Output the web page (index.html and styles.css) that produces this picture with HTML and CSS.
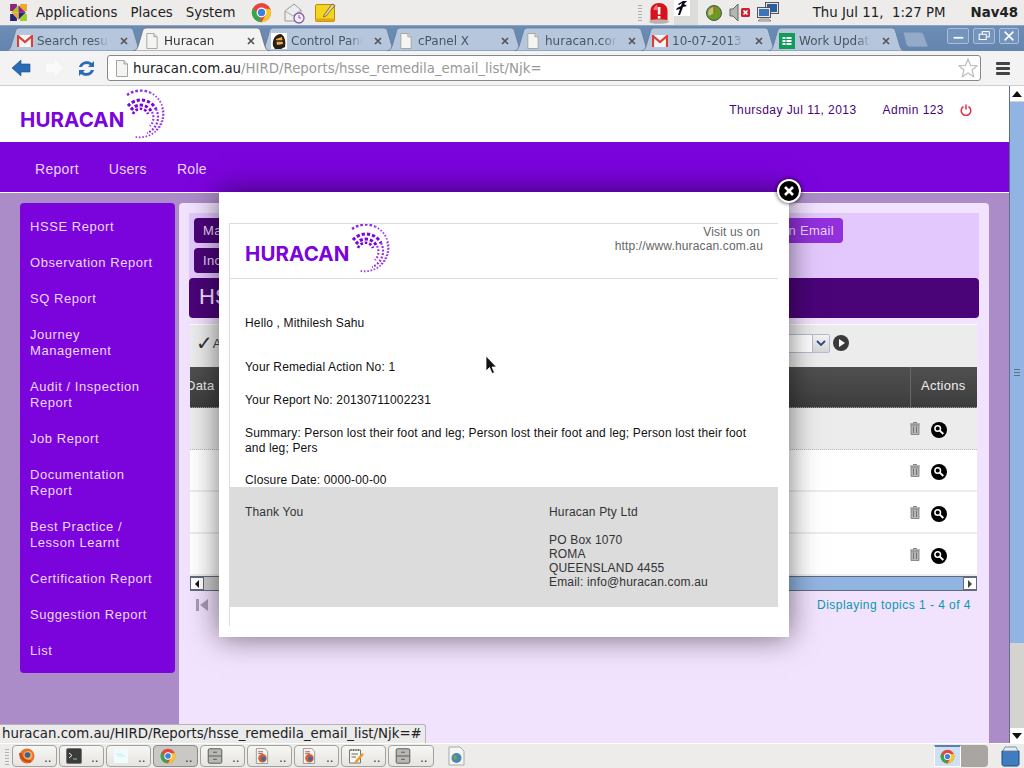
FILE: index.html
```html
<!DOCTYPE html>
<html lang="en">
<head>
<meta charset="utf-8">
<title>Huracan</title>
<link rel="stylesheet" href="styles.css">
</head>
<body>
<svg class="defs" aria-hidden="true">
  <symbol id="chrome" viewBox="0 0 24 24">
    <circle cx="12" cy="12" r="11" fill="#e8453c"/>
    <path d="M3 18.3 A11 11 0 0 1 2.5 6.5 L8 14 L12 23 A11 11 0 0 1 3 18.3z" fill="#35a84f"/>
    <path d="M12 23 A11 11 0 0 0 22.4 8.4 L12 7 L16.5 15z" fill="#f7c829"/>
    <path d="M7 14 L12 23 L3.5 19 L2 10z" fill="#35a84f"/>
    <circle cx="12" cy="12" r="5.6" fill="#fff"/>
    <circle cx="12" cy="12" r="4.2" fill="#3f7fe0"/>
  </symbol>
  <symbol id="doc" viewBox="0 0 14 17">
    <path d="M1.5 .5H9L12.5 4V16.5H1.5z" fill="#f4f4f2" stroke="#a3a3a0"/>
    <path d="M9 .5V4H12.5" fill="#dcdcd8" stroke="#a3a3a0"/>
  </symbol>
  <symbol id="gmail" viewBox="0 0 16 12">
    <rect width="16" height="12" fill="#f5f5f5"/>
    <path d="M1 12V1L8 7L15 1V12" fill="none" stroke="#dc3f35" stroke-width="2.2"/>
  </symbol>
  <symbol id="close" viewBox="0 0 10 10">
    <path d="M2 2L8 8M8 2L2 8" stroke="#555" stroke-width="1.7"/>
  </symbol>
  <symbol id="swirl" viewBox="120 86 50 55">
    <g fill="none" stroke="#7b04dd">
      <path d="M127 95A23.5 23.5 0 0 1 150 92.500" stroke-width="2.400" stroke-dasharray="2.600 2" opacity=".85"/>
      <path d="M150 92.500A23.500 23.500 0 0 1 134 136.500" stroke-width="1.800" stroke-dasharray="1.600 1.700" opacity=".75"/>
      <path d="M128 106A17 17 0 0 1 156 109" stroke-width="3" stroke-dasharray="3.200 2"/>
      <path d="M156 109A17 17 0 0 1 147 133" stroke-width="2.200" stroke-dasharray="1.800 1.700" opacity=".85"/>
      <path d="M131 110A12 12 0 0 1 151 111" stroke-width="3" stroke-dasharray="3.200 1.900"/>
      <path d="M152 112A12 12 0 0 1 150 126" stroke-width="2.200" stroke-dasharray="1.800 1.700" opacity=".8"/>
      <path d="M133 114A8 8 0 0 1 148 114" stroke-width="2.600" stroke-dasharray="2.600 1.800"/>
      <path d="M162 108A22 22 0 0 1 156 130" stroke-width="1.800" stroke-dasharray="1.500 1.700" opacity=".65"/>
    </g>
  </symbol>
  <symbol id="trash" viewBox="0 0 10 13">
    <path d="M1 3H9V12.500H1z" fill="#b5b5b5" stroke="#777" stroke-width=".8"/>
    <path d="M0 2H10M3.500 1.500V.5H6.500V1.500M3.500 4.500V11M6.500 4.500V11" fill="none" stroke="#777"/>
  </symbol>
  <symbol id="zoom" viewBox="0 0 16 16">
    <circle cx="8" cy="8" r="8" fill="#000"/>
    <circle cx="6.700" cy="6.500" r="2.800" fill="none" stroke="#fff" stroke-width="1.500"/>
    <path d="M8.800 8.600L12.300 12" stroke="#fff" stroke-width="2"/>
  </symbol>
  <symbol id="tab" viewBox="0 0 137 26" preserveAspectRatio="none">
    <path d="M0 26C3 25.500 4 24 5 21L9.500 4.500C10 2 11.500 1 13.500 1H123.500C125.500 1 127 2 127.500 4.500L132 21C133 24 134 25.500 137 26z"/>
  </symbol>
  <symbol id="cabinet" viewBox="0 0 16 17">
    <rect x=".8" y=".8" width="14.400" height="15.400" rx="1.500" fill="#b9b9b4" stroke="#555"/>
    <path d="M1 8.500H15M6 4.500H10M6 12H10" stroke="#555"/>
  </symbol>
  <symbol id="docfox" viewBox="0 0 16 17">
    <path d="M2 .5H11L14 3.500V16.500H2z" fill="#f2f2f0" stroke="#999"/>
    <circle cx="8.500" cy="11" r="4.500" fill="#d8602a"/>
    <circle cx="9.500" cy="11.500" r="2.500" fill="#3b6aa8"/>
    <path d="M4 4H9M4 6H9" stroke="#a55"/>
  </symbol>
</svg>

<div class="screen">
  <header class="gnome-panel">
    <svg class="flower" viewBox="0 0 20 20">
      <path d="M3 10L10 3V10z" fill="#9ccd2a"/><path d="M10 3L17 10H10z" fill="#932279"/>
      <path d="M17 10L10 17V10z" fill="#262577"/><path d="M10 17L3 10H10z" fill="#efa724"/>
      <path d="M2 2H8.500V4.500L4.500 8.500H2z" fill="#932279"/><path d="M18 2H11.500V4.500L15.500 8.500H18z" fill="#efa724"/>
      <path d="M18 18H11.500V15.500L15.500 11.500H18z" fill="#9ccd2a"/><path d="M2 18H8.500V15.500L4.500 11.500H2z" fill="#262577"/>
    </svg>
    <span class="menu menu-apps">Applications</span>
    <span class="menu menu-places">Places</span>
    <span class="menu menu-system">System</span>
    <svg class="launch-chrome"><use href="#chrome"/></svg>
    <svg class="launch-mail" viewBox="0 0 22 22">
      <path d="M2 9L11 2L18 8V19H2z" fill="#ededed" stroke="#999"/>
      <path d="M2 9L10 14L18 8" fill="none" stroke="#aaa"/>
      <circle cx="16" cy="16" r="5" fill="#f3eef8" stroke="#7f5fa8" stroke-width="1.300"/>
      <path d="M16 13V16H18" fill="none" stroke="#7f5fa8"/>
    </svg>
    <svg class="launch-note" viewBox="0 0 21 21">
      <rect x=".5" y="2.500" width="19" height="17" rx="1.500" fill="#f2d61e" stroke="#b58c10"/>
      <rect x=".5" y="16.500" width="19" height="3" fill="#e3a70f"/>
      <path d="M9 13L17 2L20 3.500L11 14L8.500 15z" fill="#e7cfa0" stroke="#6e5a36" stroke-width=".8"/>
    </svg>
    <div class="panel-spacer"></div>
    <div class="grip"></div>
    <svg class="tray-siren" viewBox="0 0 20 22">
      <path d="M1.500 18V9C1.500 4 5 1 10 1S18.500 4 18.500 9V18z" fill="#d8121c"/>
      <path d="M4.500 7C5 4.500 7 3 8.500 3V8H4.500z" fill="#f3777a"/>
      <ellipse cx="10" cy="19.500" rx="10" ry="2.300" fill="#b9b2ae"/>
      <rect x="8.800" y="5" width="2.600" height="7.500" fill="#fff"/><rect x="8.800" y="14" width="2.600" height="2.600" fill="#fff"/>
    </svg>
    <div class="tray-runner">
      <svg viewBox="0 0 16 16">
        <rect width="16" height="16" fill="#fff"/>
        <path d="M9 1L13 1L10 4L13 6L9 7L6 15L4 15L6 9L2 10L3 8L7 6L8 3L5 5L4 4z" fill="#08081c"/>
      </svg>
    </div>
    <svg class="tray-ball" viewBox="0 0 16 16">
      <circle cx="8" cy="8" r="7.500" fill="#6a9a22" stroke="#49505a"/>
      <path d="M8 8V2A6 6 0 0 0 3 11z" fill="#b7c77d"/>
      <path d="M8 2V8" stroke="#d8501e" stroke-width="1.500"/>
    </svg>
    <svg class="tray-sound" viewBox="0 0 22 19">
      <path d="M1 6H4L9 1V18L4 13H1z" fill="#b5b5b2" stroke="#666"/>
      <rect x="12" y="5" width="9" height="9" rx="1.500" fill="#cf2030"/>
      <path d="M14.500 7.500L18.500 11.500M18.500 7.500L14.500 11.500" stroke="#fff" stroke-width="1.600"/>
    </svg>
    <svg class="tray-net" viewBox="0 0 22 21">
      <rect x="8.500" y=".5" width="13" height="11" fill="#e5e7ea" stroke="#555"/><rect x="10" y="2" width="10" height="8" fill="#2a5d9c"/>
      <rect x=".5" y="5.500" width="13" height="10" fill="#e5e7ea" stroke="#555"/><rect x="2" y="7" width="10" height="7" fill="#3b74b8"/>
      <path d="M1 19H14L12 17H3z" fill="#ddd" stroke="#666" stroke-width=".7"/>
    </svg>
    <span class="clock">Thu Jul 11,&nbsp; 1:27 PM</span>
    <span class="user">Nav48</span>
  </header>

  <div class="tabstrip">
    <div class="tab"><svg class="tab-shape"><use href="#tab"/></svg><svg class="tab-icon tab-gmail"><use href="#gmail"/></svg><span class="tab-label">Search results</span><svg class="tab-x"><use href="#close"/></svg></div>
    <div class="tab tab-active"><svg class="tab-shape"><use href="#tab"/></svg><svg class="tab-icon"><use href="#doc"/></svg><span class="tab-label">Huracan</span><svg class="tab-x"><use href="#close"/></svg></div>
    <div class="tab"><svg class="tab-shape"><use href="#tab"/></svg><svg class="tab-icon" viewBox="0 0 16 16"><rect width="16" height="16" fill="#fff"/><path d="M2 13C1 7 4 1 10 1C14 3 15 9 14 14L10 16H4z" fill="#2b2018"/><path d="M5 6L11 4L12 11L6 12z" fill="#f0a850"/><path d="M5 8H12" stroke="#222" stroke-width="1.500"/></svg><span class="tab-label">Control Panel</span><svg class="tab-x"><use href="#close"/></svg></div>
    <div class="tab"><svg class="tab-shape"><use href="#tab"/></svg><svg class="tab-icon"><use href="#doc"/></svg><span class="tab-label">cPanel X</span><svg class="tab-x"><use href="#close"/></svg></div>
    <div class="tab"><svg class="tab-shape"><use href="#tab"/></svg><svg class="tab-icon"><use href="#doc"/></svg><span class="tab-label">huracan.com.au</span><svg class="tab-x"><use href="#close"/></svg></div>
    <div class="tab"><svg class="tab-shape"><use href="#tab"/></svg><svg class="tab-icon tab-gmail"><use href="#gmail"/></svg><span class="tab-label">10-07-2013 report</span><svg class="tab-x"><use href="#close"/></svg></div>
    <div class="tab"><svg class="tab-shape"><use href="#tab"/></svg><svg class="tab-icon" viewBox="0 0 16 16"><rect width="16" height="16" fill="#0f9d58"/><path d="M3 3.500H13V12.500H3zM3 6.500H13M3 9.500H13M7 3.500V12.500" fill="#fff" stroke="#0f9d58"/></svg><span class="tab-label">Work Update</span><svg class="tab-x"><use href="#close"/></svg></div>
    <svg class="newtab" viewBox="0 0 26 16" preserveAspectRatio="none"><path d="M0 0H17C19 0 20 1 21 3L25 15V16H7C5 16 4 15 3 13z" fill="#94aac8" stroke="#6c89ae"/></svg>
    <div class="win-controls">
      <div class="win-btn"><svg viewBox="0 0 22 16"><rect x="6" y="9" width="11" height="2" fill="#fff"/></svg></div>
      <div class="win-btn"><svg viewBox="0 0 22 16"><rect x="9" y="3" width="8" height="6" fill="none" stroke="#fff" stroke-width="1.200"/><rect x="5.500" y="6" width="8" height="6" fill="#6f90b8" stroke="#fff" stroke-width="1.200"/></svg></div>
      <div class="win-btn win-btn-last"><svg viewBox="0 0 20 16"><path d="M5 3L15 13M15 3L5 13" stroke="#fff" stroke-width="1.800"/></svg></div>
    </div>
  </div>

  <div class="toolbar">
    <svg class="nav-back" viewBox="0 0 19 18"><path d="M0 9L9 1V5H18V13H9V17z" fill="#2a6bb5" stroke="#1d4f8c" stroke-width=".6"/></svg>
    <svg class="nav-fwd" viewBox="0 0 19 18"><path d="M18 9L10 1V5H1V13H10V17z" fill="#fafafa"/></svg>
    <svg class="nav-reload" viewBox="0 0 19 19">
      <path d="M2 8C3 3 10 0 15 4L17 2V8H11L13 6C10 4 6 5 5 8z" fill="#2a6bb5"/>
      <path d="M17 11C16 16 9 19 4 15L2 17V11H8L6 13C9 15 13 14 14 11z" fill="#2a6bb5"/>
    </svg>
    <div class="omnibox">
      <svg class="omni-doc"><use href="#doc"/></svg>
      <span class="url"><span class="url-host">huracan.com.au</span>/HIRD/Reports/hsse_remedila_email_list/Njk=</span>
      <svg class="star" viewBox="0 0 20 20"><path d="M10 1L12.500 7.300L19 7.700L14 12L15.700 18.700L10 15L4.300 18.700L6 12L1 7.700L7.500 7.300z" fill="#fff" stroke="#bdbdbd" stroke-width="1.200"/></svg>
    </div>
    <div class="hamburger"><i></i><i></i><i></i></div>
  </div>

  <div class="viewport">
    <div class="page">
      <div class="site-head">
        <div class="logo"><span class="logo-word">HURACAN</span><svg class="logo-swirl"><use href="#swirl"/></svg></div>
        <div class="site-meta">
          <span class="site-date">Thursday Jul 11, 2013</span>
          <span class="site-user">Admin 123</span>
          <svg class="power" viewBox="0 0 12 12"><path d="M3.500 2.500A4.800 4.800 0 1 0 8.500 2.500M6 .5V5.500" fill="none" stroke="#e0314b" stroke-width="1.500"/></svg>
        </div>
      </div>
      <nav class="site-nav">
        <a class="nav-item">Report</a><a class="nav-item">Users</a><a class="nav-item">Role</a>
      </nav>
      <div class="main">
        <aside class="sidebar">
          <a class="side-item">HSSE Report</a>
          <a class="side-item">Observation Report</a>
          <a class="side-item">SQ Report</a>
          <a class="side-item">Journey<br>Management</a>
          <a class="side-item">Audit / Inspection<br>Report</a>
          <a class="side-item">Job Report</a>
          <a class="side-item">Documentation<br>Report</a>
          <a class="side-item">Best Practice /<br>Lesson Learnt</a>
          <a class="side-item">Certification Report</a>
          <a class="side-item">Suggestion Report</a>
          <a class="side-item">List</a>
        </aside>
        <section class="panel">
          <div class="action-box">
            <div class="action-row"><a class="btn btn-wide">Manage</a><a class="btn btn-light">Send an Email</a></div>
            <div class="action-row"><a class="btn btn-wide">Incident</a></div>
          </div>
          <h1 class="title-bar">HSSE Remedial Email List</h1>
          <div class="grid">
            <div class="grid-tools">
              <span class="check">✓</span><span class="tool-a">Add</span>
              <div class="grid-tools-fill"></div>
              <div class="select"><span class="select-arrow"><svg viewBox="0 0 10 6"><path d="M1 1L5 5L9 1" fill="none" stroke="#2c4a86" stroke-width="1.800"/></svg></span></div>
              <svg class="go" viewBox="0 0 16 16"><circle cx="8" cy="8" r="8" fill="#3a3a3a"/><path d="M6 4L12 8L6 12z" fill="#fff"/></svg>
            </div>
            <div class="grid-head"><span class="head-data">Data</span><span class="head-actions">Actions</span></div>
            <div class="grid-row grid-row-alt"><span class="row-actions"><svg class="ic-trash"><use href="#trash"/></svg><svg class="ic-zoom"><use href="#zoom"/></svg></span></div>
            <div class="grid-row"><span class="row-actions"><svg class="ic-trash"><use href="#trash"/></svg><svg class="ic-zoom"><use href="#zoom"/></svg></span></div>
            <div class="grid-row"><span class="row-actions"><svg class="ic-trash"><use href="#trash"/></svg><svg class="ic-zoom"><use href="#zoom"/></svg></span></div>
            <div class="grid-row"><span class="row-actions"><svg class="ic-trash"><use href="#trash"/></svg><svg class="ic-zoom"><use href="#zoom"/></svg></span></div>
            <div class="hscroll">
              <span class="sb-btn"><svg viewBox="0 0 8 10"><path d="M6 1L2 5L6 9z" fill="#111"/></svg></span>
              <span class="sb-thumb"></span>
              <span class="sb-btn"><svg viewBox="0 0 8 10"><path d="M2 1L6 5L2 9z" fill="#444"/></svg></span>
            </div>
          </div>
          <div class="pager">
            <svg class="pager-first" viewBox="0 0 12 12"><rect x="0" y="0" width="3" height="12" fill="#a99ab8"/><path d="M12 0V12L4 6z" fill="#a99ab8"/></svg>
            <span class="pager-info">Displaying topics 1 - 4 of 4</span>
          </div>
        </section>
      </div>
    </div>
    <div class="vscroll">
      <span class="vs-btn"><svg viewBox="0 0 10 6"><path d="M5 0L10 6H0z" fill="#111"/></svg></span>
      <span class="vs-thumb"><i></i><i></i><i></i></span>
      <span class="vs-track"></span>
      <span class="vs-btn"><svg viewBox="0 0 10 6"><path d="M5 6L10 0H0z" fill="#111"/></svg></span>
    </div>
    <div class="status-bubble">huracan.com.au/HIRD/Reports/hsse_remedila_email_list/Njk=#</div>
  </div>

  <footer class="taskbar">
    <div class="grip grip-task"></div>
    <div class="task"><svg viewBox="0 0 16 16"><circle cx="8" cy="8" r="7.500" fill="#e4742a"/><circle cx="9" cy="7.500" r="4.500" fill="#f4b04a"/><circle cx="8.500" cy="7" r="2.800" fill="#3a5fa5"/><path d="M1 5C2 10 6 14 12 13" fill="none" stroke="#c9481c" stroke-width="2.500"/></svg><span>..</span></div>
    <div class="task"><svg viewBox="0 0 16 16"><rect x=".5" y=".5" width="15" height="15" rx="1.500" fill="#3b3b3b" stroke="#777"/><path d="M3 5L6 7.500L3 10" fill="none" stroke="#eee"/><path d="M7 11H11" stroke="#7ddb5a"/></svg><span>..</span></div>
    <div class="task"><svg viewBox="0 0 16 16"><rect x="1" y="1" width="14" height="14" fill="#f0fcfb"/><path d="M3 6H9M5 8H12" stroke="#bdeeea"/></svg><span>..</span></div>
    <div class="task task-on"><svg><use href="#chrome"/></svg><span>..</span></div>
    <div class="task"><svg><use href="#cabinet"/></svg><span>..</span></div>
    <div class="task"><svg><use href="#docfox"/></svg><span>..</span></div>
    <div class="task"><svg><use href="#docfox"/></svg><span>..</span></div>
    <div class="task"><svg viewBox="0 0 16 16"><path d="M1.500 2H12.500V15H1.500z" fill="#f7f7f2" stroke="#777"/><path d="M3 1V3M5.500 1V3M8 1V3M10.500 1V3M3.500 6H10M3.500 9H8" stroke="#666"/><path d="M7 13L14 5L16 6.500L9 14.500L6.500 15z" fill="#ec9a2a"/></svg><span>..</span></div>
    <div class="task task-wide"><svg><use href="#cabinet"/></svg><span>..</span></div>
    <svg class="task-globe" viewBox="0 0 17 20"><path d="M1 1H12L16 5V19H1z" fill="#f5f5f3" stroke="#aaa"/><circle cx="8.500" cy="12" r="5" fill="#4a86b8"/><path d="M5 10L8 9L9 12L6.500 14z" fill="#7ba63e"/></svg>
    <div class="panel-spacer"></div>
    <div class="pager-box"><div class="ws-on"><svg><use href="#chrome"/></svg></div><div class="ws-off"></div></div>
    <svg class="bin" viewBox="0 0 19 21"><path d="M1 5H18V18C18 19 17 20 16 20H3C2 20 1 19 1 18z" fill="#3f7cc0" stroke="#1f4a7e"/><path d="M2 5L4 1H15L17 5z" fill="#e8eef5" stroke="#7790ac"/></svg>
  </footer>

  <div class="modal">
    <div class="mail">
      <div class="mail-head">
        <div class="logo"><span class="logo-word">HURACAN</span><svg class="logo-swirl"><use href="#swirl"/></svg></div>
        <div class="mail-visit"><span class="visit-1">Visit us on</span><span>http://www.huracan.com.au</span></div>
      </div>
      <div class="mail-body">
        <p class="greet">Hello , Mithilesh Sahu</p>
        <p>Your Remedial Action No: 1</p>
        <p>Your Report No: 20130711002231</p>
        <p class="summary">Summary: Person lost their foot and leg; Person lost their foot and leg; Person lost their foot and leg; Pers</p>
        <p>Closure Date: 0000-00-00</p>
      </div>
      <div class="mail-foot">
        <div class="foot-left">Thank You</div>
        <div class="foot-right">
          <p>Huracan Pty Ltd</p>
          <p>PO Box 1070<br>ROMA<br>QUEENSLAND 4455<br>Email: info@huracan.com.au</p>
        </div>
      </div>
    </div>
    <div class="modal-close"><svg viewBox="0 0 12 12"><path d="M2 2L10 10M10 2L2 10" stroke="#fff" stroke-width="2.600"/></svg></div>
  </div>
  <svg class="cursor" viewBox="0 0 12 20"><path d="M1 1V16L4.500 12.500L7 18.500L9.500 17.500L7 12H11.500z" fill="#111" stroke="#fff" stroke-width=".8"/></svg>
</div>
</body>
</html>
```
FILE: styles.css
```css
* { box-sizing: border-box; }
html, body { margin: 0; padding: 0; }
body { width: 1024px; height: 768px; overflow: hidden; font-family: "Liberation Sans", Arial, sans-serif; }
svg { display: block; flex: none; }
p { margin: 0; }
.defs { position: absolute; width: 0; height: 0; }
.screen { position: relative; width: 1024px; height: 768px; display: flex; flex-direction: column; overflow: hidden; }

/* desktop top panel */
.gnome-panel { height: 25px; background: #edecea; display: flex; align-items: center; padding-left: 8px; font-family: "DejaVu Sans", sans-serif; font-size: 13.33px; color: #222; flex: none; }
.flower { width: 21px; height: 21px; }
.menu { white-space: nowrap; }
.menu-apps { margin-left: 7px; }
.menu-places { margin-left: 13px; }
.menu-system { margin-left: 13px; }
.launch-chrome { width: 21px; height: 21px; margin-left: 15px; }
.launch-mail { width: 22px; height: 22px; margin-left: 11px; }
.launch-note { width: 21px; height: 21px; margin-left: 10px; }
.panel-spacer { flex: 1; }
.grip { width: 4px; height: 17px; background-image: radial-gradient(#aaa 35%, transparent 40%); background-size: 2px 3px; }
.tray-siren { width: 20px; height: 22px; margin-left: 7px; }
.tray-runner { width: 24px; height: 25px; background: #dcdcda; margin-left: 5px; }
.tray-runner svg { width: 16px; height: 16px; }
.tray-ball { width: 16px; height: 16px; margin-left: 8px; }
.tray-sound { width: 22px; height: 19px; margin-left: 7px; }
.tray-net { width: 22px; height: 21px; margin-left: 6px; }
.clock { margin-left: 34px; white-space: nowrap; }
.user { margin-left: 25px; margin-right: 6px; font-weight: 700; }

/* browser tabs */
.tabstrip { height: 26px; flex: none; background: linear-gradient(#6b8cb4, #6585ae); border-top: 1px solid #8ea6c3; display: flex; align-items: flex-end; padding-left: 6px; font-family: "DejaVu Sans", sans-serif; font-size: 12px; }
.tab { position: relative; flex: none; width: 137px; height: 24px; margin-right: -10px; display: flex; align-items: center; padding: 3px 0 0 11px; color: #4a5563; }
.tab-shape { position: absolute; left: 0; top: 0; width: 137px; height: 24px; fill: #b6c7dd; stroke: #68819f; stroke-width: 1; }
.tab-active { z-index: 2; color: #333; }
.tab-active .tab-shape { fill: #f3f3f3; stroke: #777; }
.tab-icon { position: relative; width: 16px; height: 16px; }
.tab-gmail { height: 12px; }
.tab-label { position: relative; width: 72px; margin-left: 4px; overflow: hidden; white-space: nowrap; -webkit-mask-image: linear-gradient(90deg, #000 80%, transparent); mask-image: linear-gradient(90deg, #000 80%, transparent); }
.tab-x { position: relative; width: 10px; height: 10px; margin-left: 10px; }
.newtab { width: 26px; height: 15px; margin: 0 0 4px 8px; }
.win-controls { display: flex; gap: 4px; margin: 0 0 7px 18px; }
.win-btn { width: 22px; height: 16px; border: 1px solid #a9bdd4; border-radius: 2px; background: #7395bd; }
.win-btn-last { width: 20px; }
.win-btn svg { width: 100%; height: 100%; }

/* toolbar */
.toolbar { height: 35px; flex: none; background: #f3f3f3; display: flex; align-items: center; padding-left: 12px; border-bottom: 1px solid #cfcfcf; }
.nav-back { width: 19px; height: 18px; }
.nav-fwd { width: 19px; height: 18px; margin-left: 14px; }
.nav-reload { width: 19px; height: 19px; margin-left: 13px; }
.omnibox { width: 874px; height: 26px; margin-left: 11px; background: #fff; border: 1px solid #888; border-radius: 3px; display: flex; align-items: center; padding-left: 7px; font-family: "DejaVu Sans", sans-serif; font-size: 13.33px; color: #999; }
.omni-doc { width: 14px; height: 17px; }
.url { margin-left: 4px; white-space: nowrap; }
.url-host { color: #222; }
.star { width: 20px; height: 20px; margin-left: auto; margin-right: 2px; }
.hamburger { width: 14px; margin-left: 15px; display: flex; flex-direction: column; gap: 2px; }
.hamburger i { height: 3px; background: #444; border-radius: 1px; }

/* page */
.viewport { position: relative; flex: 1; min-height: 0; display: flex; }
.page { width: 1009px; display: flex; flex-direction: column; }
.site-head { height: 56px; flex: none; background: #fff; display: flex; align-items: flex-start; padding-left: 20px; }
.logo { display: flex; align-items: flex-start; }
.logo-word { font-family: Inter, "Liberation Sans", sans-serif; font-weight: 700; font-size: 20.5px; line-height: 22px; color: #7b04dd; width: 100px; margin-top: 23px; white-space: nowrap; letter-spacing: .1px; }
.logo-swirl { width: 50px; height: 55px; }
.site-meta { margin-left: auto; display: flex; align-items: center; height: 48px; font-size: 12px; letter-spacing: .45px; color: #4a0478; padding-right: 37px; }
.site-user { margin-left: 26px; }
.power { width: 12px; height: 12px; margin-left: 16px; }
.site-nav { height: 51px; flex: none; background: #7b04dd; border-bottom: 1px solid #fff; display: flex; padding: 3px 0 0 35px; gap: 30px; align-items: center; }
.nav-item { color: #e9d5fb; font-size: 14px; letter-spacing: .3px; }
.main { flex: 1; min-height: 0; background: #ab8cc8; display: flex; gap: 4px; padding: 10px 20px 0; }
.sidebar { width: 155px; height: 470px; background: #7b04dd; border-radius: 4px; padding-top: 6px; }
.side-item { display: block; padding: 10px 0 10px 10px; line-height: 16px; font-size: 13px; letter-spacing: .55px; color: #ead8fb; }
.panel { width: 810px; background: #f1e2fd; border-radius: 4px 4px 0 0; padding: 10px; }
.action-box { height: 65px; background: #e3c8fd; padding: 5px; display: flex; flex-direction: column; gap: 5px; }
.action-row { display: flex; gap: 6px; }
.btn { height: 25px; background: #4a0478; color: #ead8fb; border-radius: 4px; font-size: 13px; line-height: 26px; padding-left: 9px; letter-spacing: .3px; }
.btn-wide { width: 200px; }
.btn-light { width: 100px; margin-left: 343px; background: #9230dd; text-align: right; padding: 0 9px 0 0; }
.title-bar { margin: 0; height: 40px; background: #4a0478; border-radius: 4px; color: #f1e2fd; font-size: 22px; font-weight: 400; line-height: 38px; padding-left: 10px; white-space: nowrap; overflow: hidden; }
.grid { margin: 6px 2px 0 1px; width: 787px; border-top: 1px solid #fff; }
.grid-tools { height: 42px; background: #ececec; display: flex; align-items: center; padding: 0 0 6px 6px; border-radius: 3px 3px 0 0; }
.check { font-family: "DejaVu Sans", sans-serif; font-size: 20px; color: #333; }
.tool-a { font-size: 13px; color: #444; margin-left: 0; }
.grid-tools-fill { flex: 1; }
.select { width: 60px; height: 19px; background: #fff; border: 1px solid #b4bccf; border-radius: 2px; display: flex; justify-content: flex-end; }
.select-arrow { width: 17px; border-left: 1px solid #b4bccf; background: linear-gradient(#f4f4f4, #d6d6d6); display: flex; align-items: center; justify-content: center; }
.select-arrow svg { width: 10px; height: 6px; }
.go { width: 16px; height: 16px; margin: 0 128px 0 3px; }
.grid-head { height: 41px; background: linear-gradient(#505050, #3d3d3d); display: flex; align-items: center; justify-content: space-between; color: #eee; font-size: 13px; letter-spacing: .25px; overflow: hidden; border-bottom: 1px dotted #999; }
.head-data { margin: 0 0 4px -4px; }
.head-actions { width: 67px; height: 100%; border-left: 1px solid #666; line-height: 37px; padding-left: 10px; }
.grid-row { height: 42px; background: #fff; border-bottom: 2px solid #ededed; display: flex; justify-content: flex-end; }
.grid-row-alt { background: #ececec; border-bottom: 1px dotted #bbb; }
.row-actions { width: 67px; display: flex; align-items: center; gap: 11px; padding-top: 4px; }
.grid-row-alt .row-actions { padding-top: 3px; }
.ic-trash { width: 10px; height: 13px; margin-bottom: 3px; }
.ic-zoom { width: 16px; height: 16px; }
.hscroll { height: 15px; display: flex; align-items: stretch; border-top: 1px solid #606a78; border-bottom: 1px solid #606a78; background: #ccc; }
.sb-btn { width: 14px; background: #fff; border: 1px solid #606a78; display: flex; align-items: center; justify-content: center; }
.sb-btn svg { width: 8px; height: 10px; }
.sb-thumb { flex: 1; margin-left: 1px; background: linear-gradient(90deg, #ccc 66%, #92b4e2 66%); }
.pager { display: flex; align-items: center; justify-content: space-between; height: 28px; padding: 0 8px 0 7px; }
.pager-first { width: 12px; height: 12px; }
.pager-info { font-size: 12px; letter-spacing: .47px; color: #0a98ae; }

.vscroll { width: 15px; background: #d5d3d0; border-left: 1px solid #5d7087; display: flex; flex-direction: column; }
.vs-btn { height: 15px; flex: none; background: #fff; display: flex; align-items: center; justify-content: center; }
.vs-btn svg { width: 10px; height: 6px; }
.vs-thumb { height: 541px; flex: none; background: #92b4e2; margin-top: 1px; display: flex; flex-direction: column; gap: 2px; align-items: center; justify-content: center; }
.vs-thumb i { width: 6px; height: 1px; background: #5d7087; }
.vs-track { flex: 1; }
.status-bubble { position: absolute; left: 0; bottom: 0; width: 426px; height: 19px; background: #ebebeb; border: 1px solid #b5b5b5; border-width: 1px 1px 0 0; border-radius: 0 3px 0 0; padding-left: 2px; font-family: "DejaVu Sans", sans-serif; font-size: 13.33px; line-height: 18px; color: #222; white-space: nowrap; }

/* bottom panel */
.taskbar { height: 25px; flex: none; background: #edecea; border-top: 1px solid #fff; display: flex; align-items: center; padding-left: 5px; gap: 2px; }
.grip-task { margin-right: 1px; }
.task { width: 45px; height: 22px; border: 1px solid #a5a29e; border-radius: 4px; background: linear-gradient(#f6f6f4, #e6e5e2); display: flex; align-items: center; padding-left: 6px; font-family: "DejaVu Sans", sans-serif; font-size: 12px; color: #333; }
.task svg { width: 16px; height: 16px; }
.task span { margin-left: 9px; padding-top: 4px; }
.task-on { background: #c9c8c4; border-color: #8f8c88; }
.task-wide { width: 46px; }
.task-globe { width: 17px; height: 20px; margin-left: 12px; }
.pager-box { width: 54px; height: 22px; display: flex; background: #a9a5a0; border-radius: 0 4px 4px 0; }
.ws-on { width: 27px; background: #cfe0f2; border: 1px solid #fff; border-top: 2px solid #5b80ad; display: flex; align-items: center; justify-content: center; }
.ws-on svg { width: 15px; height: 15px; }
.bin { width: 19px; height: 21px; margin: 0 4px 0 11px; }

/* modal overlay */
.modal { position: absolute; left: 219px; top: 192px; width: 570px; height: 445px; background: #fff; padding: 31px 11px 0 10px; box-shadow: 0 0 28px rgba(0, 0, 0, .55); }
.mail { border-top: 1px solid #ddd; border-left: 1px solid #ddd; height: 403px; display: flex; flex-direction: column; }
.mail-head { height: 55px; flex: none; border-bottom: 1px solid #ddd; display: flex; padding-left: 15px; justify-content: space-between; overflow: hidden; }
.mail-head .logo { margin-top: -4px; }
.mail-visit { display: flex; flex-direction: column; align-items: flex-end; padding: 1px 15px 0 0; font-size: 12px; line-height: 14px; letter-spacing: .14px; color: #666; }
.visit-1 { margin-right: 3px; }
.mail-body { height: 208px; flex: none; overflow: hidden; padding: 37px 30px 0 15px; font-size: 12px; line-height: 15px; letter-spacing: .15px; color: #111; }
.mail-body p { margin-bottom: 18px; }
.mail-body .greet { margin-bottom: 29px; }
.mail-body .summary { margin-bottom: 17px; }
.mail-foot { height: 120px; flex: none; background: #dcdcdc; display: flex; padding: 18px 0 0 15px; font-size: 12px; line-height: 14px; letter-spacing: .18px; color: #333; }
.foot-left { width: 304px; }
.foot-right p { margin-bottom: 14px; }
.modal-close { position: absolute; right: -12px; top: -13px; width: 24px; height: 24px; border-radius: 50%; background: #000; border: 2px solid #fff; box-shadow: 0 0 4px rgba(0, 0, 0, .8); display: flex; align-items: center; justify-content: center; }
.modal-close svg { width: 12px; height: 12px; }
.cursor { position: absolute; left: 485px; top: 355px; width: 12px; height: 20px; }
```
